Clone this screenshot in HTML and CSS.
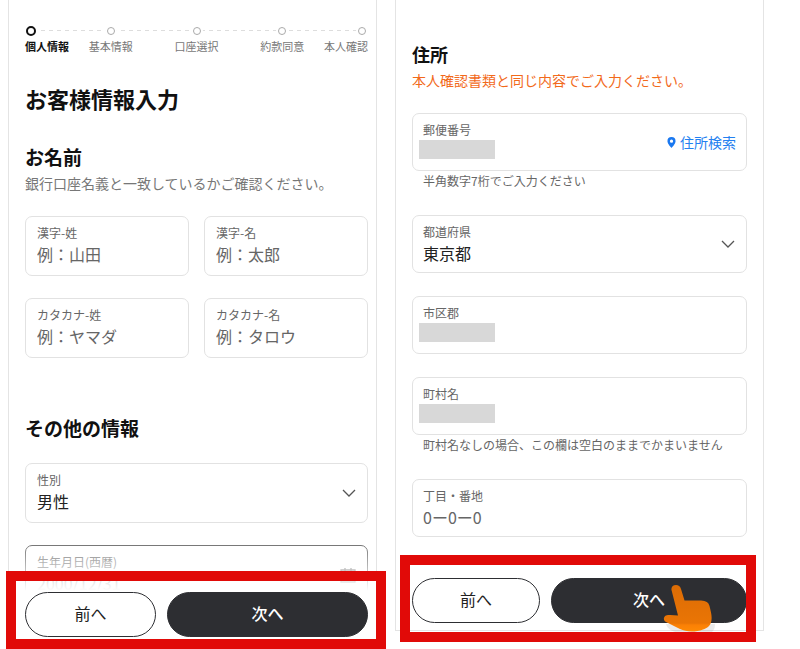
FILE: index.html
```
<!DOCTYPE html>
<html lang="ja">
<head>
    <meta charset="UTF-8">
    <meta name="viewport" content="width=device-width, initial-scale=1.0">
    <link rel="stylesheet" href="styles.css">
    <title>お客様情報入力</title>
</head>
<body>
    <main class="screens">
        <form class="screen screen-info">
            <ol class="steps">
                <li class="step current"><span class="dot"></span>個人情報</li>
                <li class="step"><span class="dot"></span>基本情報</li>
                <li class="step"><span class="dot"></span>口座選択</li>
                <li class="step"><span class="dot"></span>約款同意</li>
                <li class="step"><span class="dot"></span>本人確認</li>
            </ol>

            <h1>お客様情報入力</h1>

            <h2>お名前</h2>
            <p class="lead">銀行口座名義と一致しているかご確認ください。</p>
            <div class="name-grid">
                <div class="field">
                    <label for="kanji-sei">漢字-姓</label>
                    <input id="kanji-sei" type="text" placeholder="例：山田">
                </div>
                <div class="field">
                    <label for="kanji-mei">漢字-名</label>
                    <input id="kanji-mei" type="text" placeholder="例：太郎">
                </div>
                <div class="field">
                    <label for="kana-sei">カタカナ-姓</label>
                    <input id="kana-sei" type="text" placeholder="例：ヤマダ">
                </div>
                <div class="field">
                    <label for="kana-mei">カタカナ-名</label>
                    <input id="kana-mei" type="text" placeholder="例：タロウ">
                </div>
            </div>

            <h2 class="other-title">その他の情報</h2>
            <div class="other">
                <div class="field">
                    <label for="gender">性別</label>
                    <select id="gender">
                        <option>男性</option>
                        <option>女性</option>
                    </select>
                    <svg class="chevron" viewBox="0 0 14 8"><path d="M1 1l6 6 6-6"/></svg>
                </div>
                <div class="field birth">
                    <label for="birth">生年月日(西暦)</label>
                    <input id="birth" type="text" placeholder="2000/12/31">
                    <svg class="calendar" viewBox="0 0 16 16"><path d="M1 3h14v12H1zM1 7h14M5 1v3M11 1v3"/></svg>
                </div>
            </div>

            <div class="actions">
                <button class="btn back" type="button">前へ</button>
                <button class="btn next" type="button">次へ</button>
            </div>
        </form>

        <form class="screen screen-address">
            <h2>住所</h2>
            <p class="lead warn">本人確認書類と同じ内容でご入力ください。</p>

            <div class="field">
                <label for="zip">郵便番号</label>
                <input id="zip" class="masked" type="text">
                <a class="search" href="#">
                    <svg class="pin" viewBox="0 0 10 12"><path fill-rule="evenodd" d="M5 0a4.500 4.500 0 0 0-4.500 4.500C.5 7.500 5 12 5 12s4.500-4.500 4.500-7.500A4.500 4.500 0 0 0 5 0zm0 2.800a1.800 1.800 0 1 1 0 3.600 1.800 1.800 0 0 1 0-3.600z"/></svg>
                    住所検索
                </a>
            </div>
            <p class="hint">半角数字7桁でご入力ください</p>

            <div class="field">
                <label for="pref">都道府県</label>
                <select id="pref">
                    <option>東京都</option>
                </select>
                <svg class="chevron" viewBox="0 0 14 8"><path d="M1 1l6 6 6-6"/></svg>
            </div>

            <div class="field">
                <label for="city">市区郡</label>
                <input id="city" class="masked" type="text">
            </div>

            <div class="field">
                <label for="town">町村名</label>
                <input id="town" class="masked" type="text">
            </div>
            <p class="hint">町村名なしの場合、この欄は空白のままでかまいません</p>

            <div class="field">
                <label for="block">丁目・番地</label>
                <input id="block" type="text" placeholder="0ー0ー0">
            </div>

            <div class="actions">
                <button class="btn back" type="button">前へ</button>
                <button class="btn next" type="button">次へ</button>
                <svg class="hand" viewBox="0 0 52 48">
                    <defs>
                        <linearGradient id="skin" x1="0" y1="0" x2="0" y2="1">
                            <stop offset="0" stop-color="#dc6c05"/>
                            <stop offset="0.820" stop-color="#ea7505"/>
                            <stop offset="0.860" stop-color="#fb8005"/>
                            <stop offset="1" stop-color="#ff8a05"/>
                        </linearGradient>
                    </defs>
                    <path class="shade" d="M3 40H52C52 44 51 46 49 48H12C7 46 4 44 3 40Z"/>
                    <path fill="url(#skin)" d="M8.500 6C8 3 10 1 13 1C15.500 1 17 2 18 5L21.500 16.500L38 16.500C43 17 45.500 18 46.500 22C48 28 49 32 48.500 36C48 42 44 44 40 45.500C32 48.500 23 48 17 45L4 38.500C0 37 0 33 3 31.500C7 30.500 11 31.500 15 31.500Z"/>
                </svg>
            </div>
        </form>
    </main>
</body>
</html>
```
FILE: styles.css
```
*,
*::after {
    box-sizing: border-box;
}

body {
    margin: 0;
    background: #fff;
    color: #111;
    font-family: "Noto Sans CJK JP", sans-serif;
    overflow: hidden;
}

.screens {
    display: grid;
    grid-template-columns: 1fr 1fr;
    gap: 18px;
    align-items: start;
    padding: 0 36px 0 8px;
}

.screen {
    position: relative;
    border: 1px solid #e4e4e4;
    border-top: none;
}

.screen-info {
    padding: 26px 8px 44px 16px;
}

.screen-address {
    padding: 41px 16px 7px;
}

/* step indicator */
.steps {
    display: grid;
    grid-template-columns: minmax(0, 1fr) repeat(3, minmax(0, 2fr)) minmax(0, 1fr);
    margin: 0;
    padding: 0;
    list-style: none;
    background: repeating-linear-gradient(90deg, #ddd 0 4px, transparent 4px 8px) 0 4px / 100% 1px no-repeat;
}

.step {
    display: flex;
    flex-direction: column;
    align-items: center;
    gap: 2px;
    color: #777;
    font-size: 11px;
    line-height: 16px;
    white-space: nowrap;
}

.step:first-child {
    align-items: flex-start;
}

.step:last-child {
    align-items: flex-end;
}

.dot {
    width: 8px;
    height: 8px;
    margin: 1px 2px;
    border: 1px solid #aaa;
    border-radius: 50%;
    background: #fff;
    box-shadow: 0 0 0 2px #fff;
}

.current {
    color: #111;
    font-weight: 700;
}

.current .dot {
    width: 10px;
    height: 10px;
    margin: 0 1px;
    border: 2px solid #111;
}

/* headings */
h1 {
    margin: 28px 0 0;
    font-size: 22px;
    line-height: 32px;
    font-weight: 700;
}

h2 {
    margin: 0;
    font-size: 18px;
    line-height: 26px;
    font-weight: 700;
}

.screen-info h2 {
    margin-top: 30px;
    font-size: 19px;
}

.screen-info .other-title {
    margin-top: 57px;
}

.lead {
    margin: 3px 0 23px;
    color: #777;
    font-size: 14px;
    line-height: 20px;
}

.warn {
    color: #f26a1b;
}

/* fields */
.name-grid {
    display: grid;
    grid-template-columns: 1fr 1fr;
    gap: 22px 15px;
}

.other {
    display: grid;
    gap: 22px;
    margin-top: 22px;
}

.field {
    position: relative;
    display: flex;
    flex-direction: column;
    height: 60px;
    padding: 7px 11px;
    border: 1px solid #e2e2e2;
    border-radius: 7px;
}

.screen-address .field {
    height: 58px;
    margin-bottom: 23px;
    padding: 7px 10px;
}

.field label {
    color: #666;
    font-size: 12px;
    line-height: 18px;
}

.field input,
.field select {
    width: 100%;
    height: 24px;
    margin: 0;
    padding: 0;
    border: none;
    outline: none;
    appearance: none;
    background: transparent;
    color: #222;
    font-family: inherit;
    font-size: 16px;
    line-height: 24px;
}

.field input::placeholder {
    color: #666;
    opacity: 1;
}

.field .masked {
    width: 76px;
    height: 19px;
    margin: 1px 0 0 -4px;
    background: #d8d8d8;
}

.field.birth {
    border-color: #555;
}

.chevron,
.calendar {
    position: absolute;
    right: 11px;
    top: 50%;
    width: 14px;
    height: 8px;
    transform: translateY(-50%);
    fill: none;
    stroke: #555;
    stroke-width: 1.300;
    pointer-events: none;
}

.calendar {
    width: 16px;
    height: 16px;
}

.search {
    position: absolute;
    right: 10px;
    top: 50%;
    display: flex;
    align-items: center;
    gap: 4px;
    transform: translateY(-50%);
    color: #2380f0;
    font-size: 14px;
    line-height: 20px;
    text-decoration: none;
}

.pin {
    width: 9px;
    height: 11px;
    fill: #1a78f0;
}

.screen-address .hint {
    margin: -22px 11px 25px;
    color: #666;
    font-size: 12px;
    line-height: 18px;
}

/* bottom buttons */
.actions {
    display: grid;
    grid-template-columns: 131fr 201fr;
    gap: 11px;
}

.screen-info .actions {
    position: absolute;
    left: 0;
    right: 0;
    bottom: 0;
    padding: 47px 8px 12px 16px;
    background: linear-gradient(rgba(255, 255, 255, 0.200), #fff 46px);
}

.screen-address .actions {
    margin-top: 41px;
}

.btn {
    height: 45px;
    padding: 0 0 4px;
    border: 1px solid #2d2e32;
    border-radius: 23px;
    font-family: inherit;
    font-size: 16px;
    cursor: pointer;
}

.back {
    background: #fff;
    color: #222;
}

.next {
    background: #2d2e32;
    color: #fff;
    font-weight: 500;
}

.hand {
    position: absolute;
    right: 48px;
    bottom: -2px;
    width: 52px;
    height: 48px;
}

.shade {
    fill: rgba(0, 0, 0, 0.080);
}

/* red highlight around the buttons */
.actions::after {
    content: "";
    position: absolute;
    border: 10px solid #e10a08;
    pointer-events: none;
}

.screen-info .actions::after {
    inset: 26px -10px 0 -3px;
}

.screen-address .actions::after {
    left: 4px;
    right: 7px;
    bottom: -12px;
    height: 87px;
}
```
